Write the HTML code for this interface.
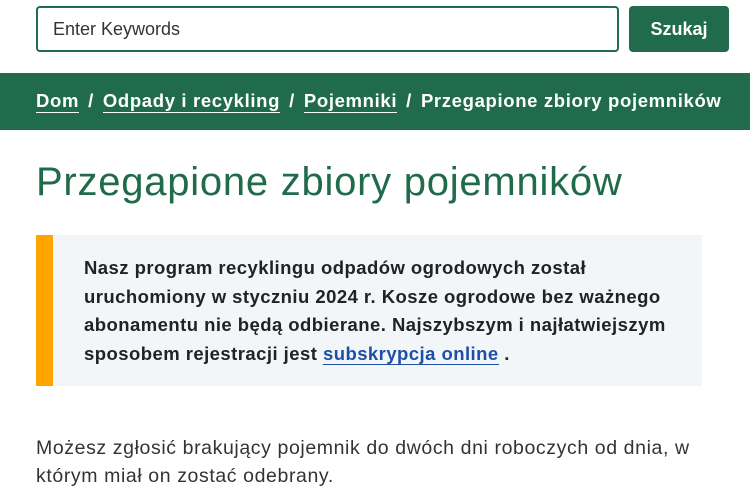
<!DOCTYPE html>
<html><head><meta charset="utf-8"><style>
*{margin:0;padding:0;box-sizing:border-box}
body{width:750px;height:504px;overflow:hidden;background:#fff;font-family:"Liberation Sans",sans-serif;color:#1e1e1e}
.search{position:absolute;left:36px;top:6px;width:583px;height:46px;border:2px solid #1f6b4b;border-radius:4px;font-size:18px;color:#333;padding:11px 15px}
.btn{position:absolute;left:629px;top:6px;width:100px;height:46px;background:#1f6b4b;border-radius:4px;color:#fff;font-weight:bold;font-size:18px;text-align:center;line-height:46px}
.bc{position:absolute;left:0;top:73px;width:750px;height:57px;background:#1f6b4b;color:#fff;font-weight:bold;font-size:18.5px;padding:17px 0 0 36px;white-space:nowrap;letter-spacing:0.65px}
.bc u{text-decoration:none;border-bottom:1px solid #fff;padding-bottom:1px}
.bc span{margin:0 9px}
h1{position:absolute;left:36px;top:160px;font-weight:normal;font-size:40px;color:#1f6b4b;white-space:nowrap;letter-spacing:0.75px}
.call{position:absolute;left:36px;top:235px;width:666px;height:151px;background:#f3f6f8;border-left:17px solid #ffa500;padding:19px 0 0 31px;font-weight:bold;font-size:18.5px;line-height:28.5px;color:#222;white-space:nowrap;letter-spacing:0.45px}
.call a{color:#1d4fa6;text-decoration:none;border-bottom:1px solid #1d4fa6}
p{position:absolute;left:36px;top:434px;font-size:19.5px;line-height:28px;color:#333;white-space:nowrap;letter-spacing:0.6px}
</style></head><body>
<div class="search">Enter Keywords</div>
<div class="btn">Szukaj</div>
<div class="bc"><u>Dom</u><span>/</span><u>Odpady i recykling</u><span>/</span><u>Pojemniki</u><span>/</span>Przegapione zbiory pojemników</div>
<h1>Przegapione zbiory pojemników</h1>
<div class="call">Nasz program recyklingu odpadów ogrodowych został<br>uruchomiony w styczniu 2024 r. Kosze ogrodowe bez ważnego<br>abonamentu nie będą odbierane. Najszybszym i najłatwiejszym<br>sposobem rejestracji jest <a>subskrypcja online</a> .</div>
<p>Możesz zgłosić brakujący pojemnik do dwóch dni roboczych od dnia, w<br>którym miał on zostać odebrany.</p>
</body></html>
